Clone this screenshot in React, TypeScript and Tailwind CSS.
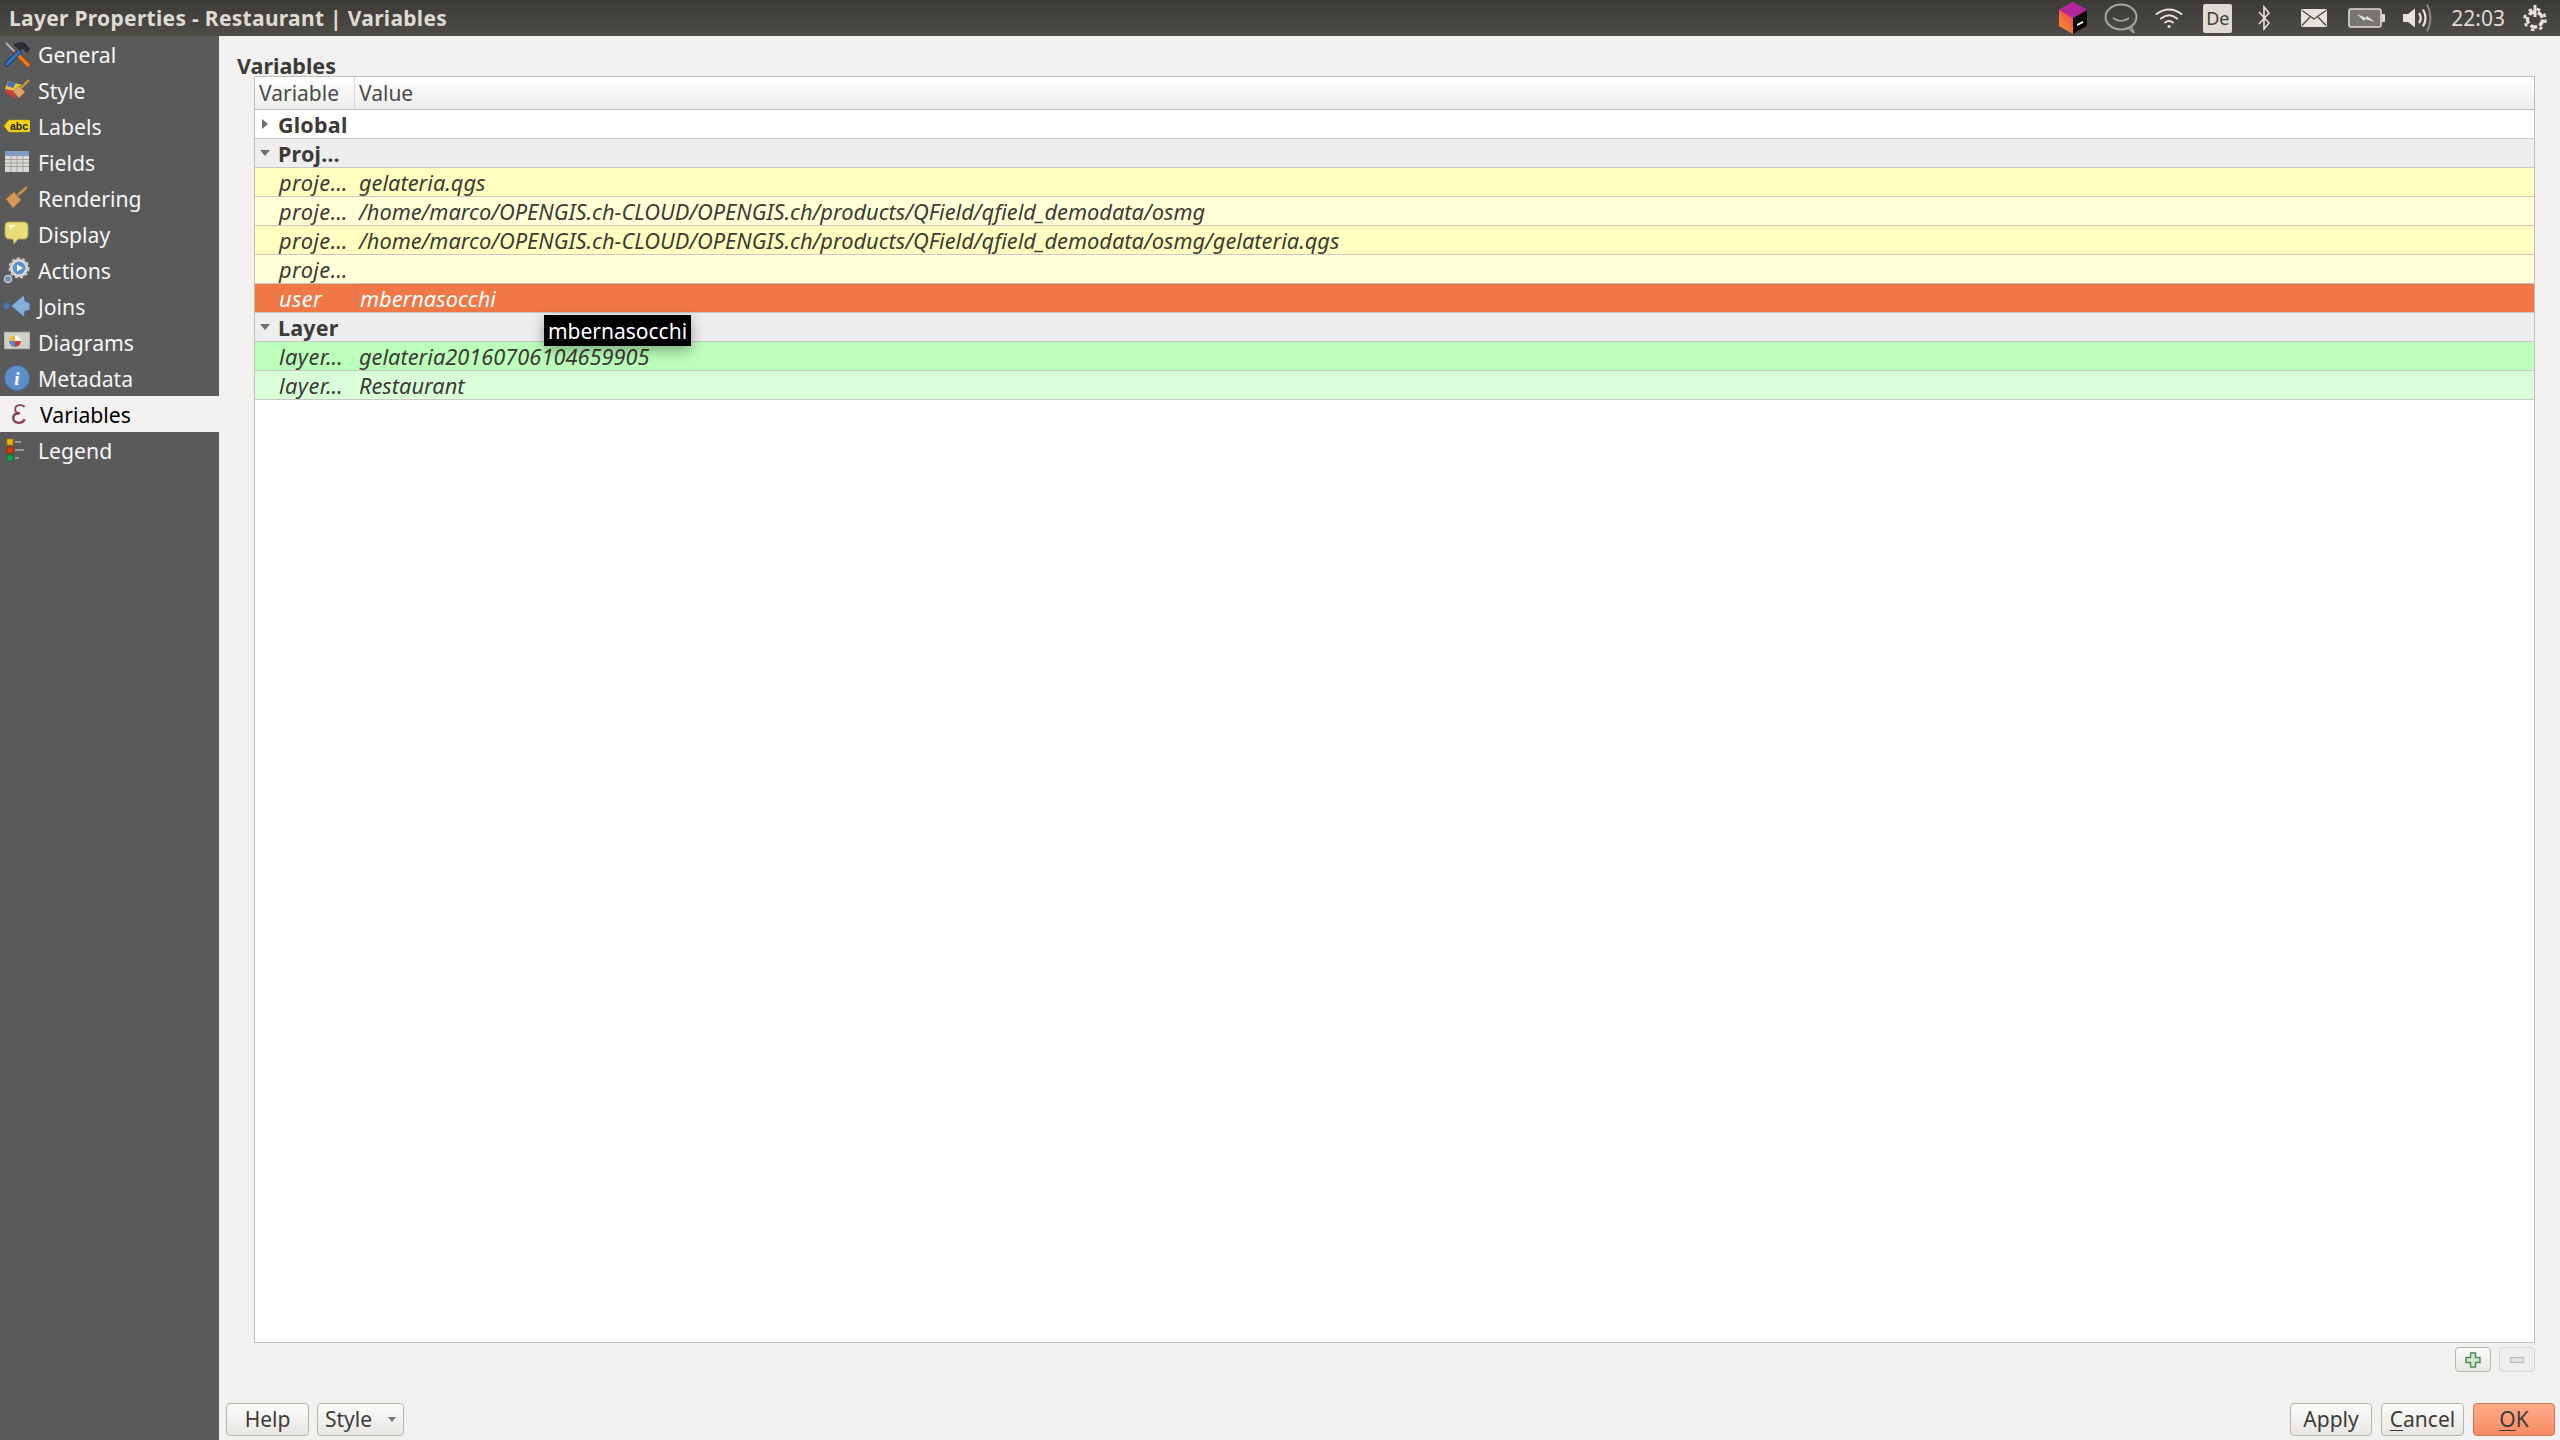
import type { ReactNode } from 'react';

const font = { fontFamily: '"Noto Sans", sans-serif' };

const HammerIcon = () => (
  <svg width="26" height="26" viewBox="0 0 26 26">
    <path d="M2 2 L13 13" stroke="#b4b8bc" strokeWidth="1.8" />
    <path d="M12 12 L24 24" stroke="#8a3f08" strokeWidth="5" strokeLinecap="round" />
    <path d="M12 12 L24 24" stroke="#ee7a1e" strokeWidth="3.4" strokeLinecap="round" />
    <path d="M3 23 L15 11" stroke="#173b66" strokeWidth="5" strokeLinecap="round" />
    <path d="M3 23 L15 11" stroke="#2f74bd" strokeWidth="3.2" strokeLinecap="round" />
    <path d="M9 4 Q15 -1 21 2 L26 8 L23 12 L19 8 L16 9 L13 7 Z" fill="#2b2e33" />
  </svg>
);

const StyleIcon = () => (
  <svg width="26" height="26" viewBox="0 0 26 26">
    <path d="M4 4 L18 8 L10 14 L1 12 Z" fill="#e7c93a" />
    <path d="M4 4 L12 6 L9 11 L3 9 Z" fill="#4a6fb0" />
    <path d="M1 12 L10 14 L13 22 L2 16 Z" fill="#d0403a" />
    <path d="M9 14 L15 9 L21 15 L15 21 Z" fill="#d9a56c" stroke="#a87642" strokeWidth="0.7" />
    <path d="M17 11 L25 3" stroke="#c9963f" strokeWidth="2.4" />
  </svg>
);

const LabelsIcon = () => (
  <svg width="26" height="26" viewBox="0 0 26 26">
    <path d="M0 13 L5 7 H25 Q26 7 26 8 V18 Q26 19 25 19 H5 Z" fill="#f2d21b" stroke="#c8a80c" strokeWidth="0.6" />
    <text x="15" y="17" textAnchor="middle" fontSize="10.5" fontWeight="700" fill="#222" fontFamily="Liberation Sans">abc</text>
  </svg>
);

const FieldsIcon = () => (
  <svg width="24" height="24" viewBox="0 0 24 24">
    <rect x="0" y="1" width="24" height="21" fill="#d8d8d4" />
    <rect x="0" y="1" width="24" height="5" fill="#7f9dc4" />
    <path d="M0 9.5H24M0 13H24M0 16.5H24M6 6V22M12 6V22M18 6V22" stroke="#a4a49e" strokeWidth="1" />
  </svg>
);

const BrushIcon = () => (
  <svg width="24" height="24" viewBox="0 0 24 24">
    <path d="M1 13 L9 6 L16 14 L8 22 Z" fill="#d49a5c" stroke="#a36f38" strokeWidth="0.8" />
    <path d="M13 9 L22 1" stroke="#c98f45" strokeWidth="2.6" />
  </svg>
);

const DisplayIcon = () => (
  <svg width="26" height="26" viewBox="0 0 26 26">
    <path d="M5 1 H20 Q24 1 24 5 V13 Q24 18 20 18 H14 L10 23 L9 18 H5 Q1 18 1 13 V5 Q1 1 5 1 Z" fill="#e9dc7a" stroke="#b9a94c" strokeWidth="0.8" />
    <path d="M5 4 H14 Q8 5 6 9 Z" fill="#fdfbe2" />
  </svg>
);

const ActionsIcon = () => (
  <svg width="28" height="28" viewBox="0 0 28 28">
    <circle cx="16" cy="12" r="9" fill="#e3e3e3" stroke="#c8c8c8" strokeWidth="3" strokeDasharray="3 2" />
    <circle cx="16" cy="12" r="6.5" fill="#5d8fc9" />
    <path d="M14 8.5 L20 12 L14 15.5 Z" fill="#fff" />
    <circle cx="5" cy="23" r="3.5" fill="#6f8fb5" stroke="#c8c8c8" strokeWidth="1.5" />
  </svg>
);

const JoinsIcon = () => (
  <svg width="28" height="26" viewBox="0 0 28 26">
    <circle cx="3.5" cy="13" r="3" fill="#4c78ad" />
    <path d="M8 13 L21 2 L22 8 Q26 9 27 11 V16 Q26 18 22 18 L21 24 Z" fill="#86aed8" stroke="#3c5f8a" strokeWidth="0.8" />
  </svg>
);

const DiagramsIcon = () => (
  <svg width="26" height="24" viewBox="0 0 26 24">
    <rect x="0" y="2" width="26" height="17" fill="#cfd0c8" stroke="#8d8d88" strokeWidth="0.7" />
    <circle cx="11" cy="11" r="6" fill="#f3f3f3" />
    <path d="M11 11 V5 A6 6 0 0 0 5 11 Z" fill="#e6b93c" />
    <path d="M11 11 H5 A6 6 0 0 0 11 17 Z" fill="#5d86bd" />
    <path d="M11 11 V17 A6 6 0 0 0 17 11 Z" fill="#cf3a34" />
  </svg>
);

const MetadataIcon = () => (
  <svg width="26" height="26" viewBox="0 0 26 26">
    <circle cx="13" cy="13" r="12.5" fill="#5f8fcb" stroke="#3f6fa8" strokeWidth="0.8" />
    <text x="13" y="20" textAnchor="middle" fontSize="19" fontWeight="700" fontStyle="italic" fill="#fff" fontFamily="Liberation Serif">i</text>
  </svg>
);

const LegendIcon = () => (
  <svg width="22" height="24" viewBox="0 0 22 24">
    <rect x="1" y="1" width="6" height="6" fill="#f4b400" stroke="#a87b00" strokeWidth="0.8" />
    <rect x="1" y="9" width="6" height="6" fill="#d9400e" stroke="#8c2806" strokeWidth="0.8" />
    <rect x="1" y="17" width="6" height="6" fill="#17a34a" stroke="#0d6e30" strokeWidth="0.8" />
    <path d="M9 4H15M9 12H18M9 20H13" stroke="#9a9a9a" strokeWidth="2" />
  </svg>
);

const VariablesIcon = () => (
  <svg width="16" height="20" viewBox="0 0 18 26" className="ml-[11px]" fill="none" stroke="#8a3a5c">
    <path d="M16 4 Q15 1.5 11 1.5 Q4 1.5 4 7 Q4 11.5 10 12" strokeWidth="2.4" />
    <path d="M10 12 Q1.5 12 1.5 18 Q1.5 24.5 9 24.5 Q14 24.5 16.5 20" strokeWidth="3" />
  </svg>
);

const NAV: { label: string; icon: ReactNode }[] = [
  { label: 'General', icon: <HammerIcon /> },
  { label: 'Style', icon: <StyleIcon /> },
  { label: 'Labels', icon: <LabelsIcon /> },
  { label: 'Fields', icon: <FieldsIcon /> },
  { label: 'Rendering', icon: <BrushIcon /> },
  { label: 'Display', icon: <DisplayIcon /> },
  { label: 'Actions', icon: <ActionsIcon /> },
  { label: 'Joins', icon: <JoinsIcon /> },
  { label: 'Diagrams', icon: <DiagramsIcon /> },
  { label: 'Metadata', icon: <MetadataIcon /> },
  { label: 'Variables', icon: <VariablesIcon /> },
  { label: 'Legend', icon: <LegendIcon /> },
];

const Tray = () => (
  <div className="flex h-full items-center">
    <svg width="30" height="34" viewBox="0 0 30 34" className="mr-[16px]">
      <defs>
        <linearGradient id="cube" x1="0" y1="1" x2="1" y2="0">
          <stop offset="0" stopColor="#f6a623" />
          <stop offset="0.6" stopColor="#f0385f" />
          <stop offset="1" stopColor="#d92c9a" />
        </linearGradient>
      </defs>
      <path d="M15 1 L29 9 V25 L15 33 L1 25 V9 Z" fill="url(#cube)" />
      <path d="M15 1 L29 9 L15 17 L1 9 Z" fill="#b0279f" />
      <path d="M15 17 L29 9 V25 L15 33 Z" fill="#0b0b0b" />
      <path d="M19 23 L25 20 V22 L19 25 Z" fill="#fff" />
    </svg>
    <svg width="34" height="32" viewBox="0 0 34 32" className="mr-[17px]" fill="none">
      <ellipse cx="17" cy="15" rx="15.5" ry="12.5" stroke="#a8a69f" strokeWidth="2" />
      <path d="M9 16 Q17 22 25 16" stroke="#a8a69f" strokeWidth="1.6" />
      <path d="M24 26 L30 31 L27 24" stroke="#a8a69f" strokeWidth="1.6" />
    </svg>
    <svg width="28" height="22" viewBox="0 0 28 22" className="mr-[20px]" fill="none" stroke="#e6e3dc" strokeLinecap="round">
      <path d="M1.5 7 Q14 -2 26.5 7" strokeWidth="2" />
      <path d="M6 11.5 Q14 5 22 11.5" strokeWidth="2" />
      <path d="M10 15.5 Q14 12.5 18 15.5" strokeWidth="2" />
      <circle cx="14" cy="19.5" r="1.6" fill="#e6e3dc" stroke="none" />
    </svg>
    <div className="mr-[26px] flex h-[29px] w-[29px] items-center justify-center rounded-[2px] bg-[#dfdbd2] text-[18px] leading-none text-[#3c3b37]" style={font}>
      De
    </div>
    <svg width="12" height="26" viewBox="0 0 12 26" className="mr-[31px]" fill="none" stroke="#e6e3dc" strokeWidth="1.6">
      <path d="M1 7 L11 18 L6 24 V2 L11 8 L1 19" />
    </svg>
    <svg width="26" height="18" viewBox="0 0 26 18" className="mr-[21px]">
      <rect x="0" y="0" width="26" height="18" rx="1.5" fill="#e6e3dc" />
      <path d="M1 1.5 L13 10 L25 1.5 M1 16.5 L9 8 M25 16.5 L17 8" stroke="#4a4843" strokeWidth="1.3" fill="none" />
    </svg>
    <svg width="38" height="20" viewBox="0 0 38 20" className="mr-[16px]">
      <rect x="1" y="1" width="32" height="18" rx="2" fill="#77756f" stroke="#dfdbd2" strokeWidth="1.6" />
      <rect x="33.5" y="6" width="3.5" height="8" rx="1" fill="#dfdbd2" />
      <path d="M9 6 L18 10 L19 8 L27 14 L17 11 L16 13 Z" fill="#e6e3dc" />
    </svg>
    <svg width="30" height="30" viewBox="0 0 30 30" className="mr-[19px]" fill="none">
      <path d="M1 11 H6 L13 5.5 V24.5 L6 19 H1 Z" fill="#e6e3dc" />
      <path d="M17 10 Q20.5 15 17 20" stroke="#e6e3dc" strokeWidth="2.2" />
      <path d="M21 6.5 Q26 15 21 23.5" stroke="#e6e3dc" strokeWidth="2.2" />
      <path d="M25 1.5 Q32 15 25 28.5" stroke="#8b8982" strokeWidth="2" />
    </svg>
    <span className="mr-[17px] text-[21px] leading-none text-[#dfdbd2]" style={font}>22:03</span>
    <svg width="26" height="28" viewBox="0 0 26 28" className="mr-[12px]" fill="none" stroke="#e6e3dc">
      <circle cx="13" cy="15.5" r="7.5" strokeWidth="3.4" strokeDasharray="7 2.5" />
      <path d="M13 1 V13" strokeWidth="3" />
      <circle cx="13" cy="15.5" r="10.5" strokeWidth="2.6" strokeDasharray="3.5 5" />
    </svg>
  </div>
);

const ROWS: { kind: 'group' | 'item'; open?: boolean; name: string; value?: string; bg: string; current?: boolean }[] = [
  { kind: 'group', open: false, name: 'Global', bg: 'bg-white' },
  { kind: 'group', open: true, name: 'Proj…', bg: 'bg-[#eeeeee]' },
  { kind: 'item', name: 'proje…', value: 'gelateria.qgs', bg: 'bg-[#ffffc0]' },
  { kind: 'item', name: 'proje…', value: '/home/marco/OPENGIS.ch-CLOUD/OPENGIS.ch/products/QField/qfield_demodata/osmg', bg: 'bg-[#ffffd8]' },
  { kind: 'item', name: 'proje…', value: '/home/marco/OPENGIS.ch-CLOUD/OPENGIS.ch/products/QField/qfield_demodata/osmg/gelateria.qgs', bg: 'bg-[#ffffc0]' },
  { kind: 'item', name: 'proje…', value: '', bg: 'bg-[#ffffd8]' },
  { kind: 'item', name: 'user', value: 'mbernasocchi', bg: 'bg-[#f07746]', current: true },
  { kind: 'group', open: true, name: 'Layer', bg: 'bg-[#eeeeee]' },
  { kind: 'item', name: 'layer…', value: 'gelateria20160706104659905', bg: 'bg-[#bbffbb]' },
  { kind: 'item', name: 'layer…', value: 'Restaurant', bg: 'bg-[#d9ffd9]' },
];

const TreeRow = ({ row }: { row: (typeof ROWS)[number] }) => {
  if (row.kind === 'group') {
    return (
      <div className={`flex h-[29px] items-center border-b border-[#c9c7c3] ${row.bg}`}>
        <div className="flex w-[23px] justify-center pr-[3px]">
          {row.open ? (
            <div className="h-0 w-0 border-x-[5px] border-t-[6px] border-x-transparent border-t-[#6f6f6f]" />
          ) : (
            <div className="h-0 w-0 border-y-[5px] border-l-[6px] border-y-transparent border-l-[#6f6f6f]" />
          )}
        </div>
        <span className="pt-[1px] text-[21.5px] font-bold leading-none tracking-[0.2px] text-[#3c3b37]">{row.name}</span>
      </div>
    );
  }
  return (
    <div className={`flex h-[29px] items-center border-b border-[#c9c7c3] text-[21.8px] italic leading-none ${row.bg} ${row.current ? 'text-white' : 'text-[#3c3b37]'}`}>
      <span className="w-[100px] pl-[24px] pt-[1px] tracking-[0.4px]">{row.name}</span>
      <span className={`flex h-full flex-1 items-center pl-[4px] pt-[1px] ${row.current ? 'border-l border-t border-dotted border-[#b9775a]' : ''}`}>{row.value}</span>
    </div>
  );
};

const Button = ({ children, className = '' }: { children: ReactNode; className?: string }) => (
  <div className={`flex h-[33px] items-center justify-center rounded-[4px] border border-[#b8b5b0] bg-gradient-to-b from-[#fbfbfa] to-[#e9e7e4] text-[21px] leading-none text-[#3c3b37] ${className}`}>
    {children}
  </div>
);

export default function App() {
  return (
    <div className="flex h-[1440px] w-[2560px] flex-col overflow-hidden bg-[#f2f1f0]" style={font}>
      <header className="flex h-[36px] shrink-0 items-center justify-between bg-gradient-to-b from-[#3c3b37] to-[#4e4c47] pl-[9px]">
        <span className="text-[21px] font-bold leading-none tracking-[0.3px] text-[#dfdbd2]">Layer Properties - Restaurant | Variables</span>
        <Tray />
      </header>
      <div className="flex min-h-0 flex-1">
        <nav className="w-[219px] shrink-0 bg-[#5a5a5a]">
          {NAV.map((item) => (
            <div
              key={item.label}
              className={`flex h-[36px] items-center text-[21.2px] leading-none ${item.label === 'Variables' ? 'bg-[#f2f1f0] text-black' : 'text-[#f5f5f5]'}`}
            >
              <span className={`flex w-[38px] pr-[4px] ${item.label === 'Variables' ? 'justify-start' : 'justify-center'}`}>{item.icon}</span>
              <span className={`pt-[2px] ${item.label === 'Variables' ? 'pl-[2px]' : ''}`}>{item.label}</span>
            </div>
          ))}
        </nav>
        <main className="relative flex min-w-0 flex-1 flex-col pr-[5px]">
          <div className="flex h-[40px] shrink-0 items-end pl-[18px] text-[21.5px] font-bold leading-none text-[#3c3b37]">Variables</div>
          <div className="ml-[35px] mr-[20px] flex min-h-0 flex-1 flex-col border border-[#c2bfba] bg-white">
            <div className="flex h-[33px] shrink-0 border-b border-[#c2bfba] bg-gradient-to-b from-white to-[#ececeb] text-[21px] leading-none text-[#4c4b47]">
              <div className="flex w-[100px] items-center border-r border-[#dcdad6] pl-[4px]">Variable</div>
              <div className="flex items-center pl-[4px]">Value</div>
            </div>
            {ROWS.map((row, i) => (
              <TreeRow key={i} row={row} />
            ))}
          </div>
          <div className="mr-[20px] mt-[4px] flex h-[26px] shrink-0 justify-end gap-[8px]">
            <div className="flex h-[25px] w-[36px] items-center justify-center rounded-[4px] border border-[#b8b5b0] bg-gradient-to-b from-[#fbfbfa] to-[#e9e7e4]">
              <svg width="16" height="16" viewBox="0 0 16 16">
                <path d="M5.5 1 H10.5 V5.5 H15 V10.5 H10.5 V15 H5.5 V10.5 H1 V5.5 H5.5 Z" fill="#cfe6cf" stroke="#4f8a55" strokeWidth="1.4" />
              </svg>
            </div>
            <div className="flex h-[25px] w-[36px] items-center justify-center rounded-[4px] border border-[#d6d4d0] bg-[#efeeec]">
              <div className="h-[6px] w-[14px] border border-[#b5b5b2] bg-[#e2e2e0]" />
            </div>
          </div>
          <div className="flex h-[67px] shrink-0 items-start justify-between pl-[7px] pt-[30px]">
            <div className="flex gap-[8px]">
              <Button className="w-[83px]">Help</Button>
              <Button className="w-[87px]">
                <span>Style</span>
                <span className="ml-[16px] h-0 w-0 border-x-[4px] border-t-[5px] border-x-transparent border-t-[#777777]" />
              </Button>
            </div>
            <div className="flex gap-[9px]">
              <Button className="w-[82px]">Apply</Button>
              <Button className="w-[83px]"><span className="underline decoration-1 underline-offset-[3px]">C</span>ancel</Button>
              <Button className="w-[82px] !border-[#c9785a] !from-[#fdab8b] !to-[#f58a60]"><span className="underline decoration-1 underline-offset-[3px]">O</span>K</Button>
            </div>
          </div>
          <div className="absolute left-[325px] top-[279px] flex h-[31px] w-[147px] items-center justify-center bg-black pt-[1px] text-[21px] leading-none text-white shadow-[0_4px_14px_rgba(0,0,0,0.35)]">
            mbernasocchi
          </div>
        </main>
      </div>
    </div>
  );
}
